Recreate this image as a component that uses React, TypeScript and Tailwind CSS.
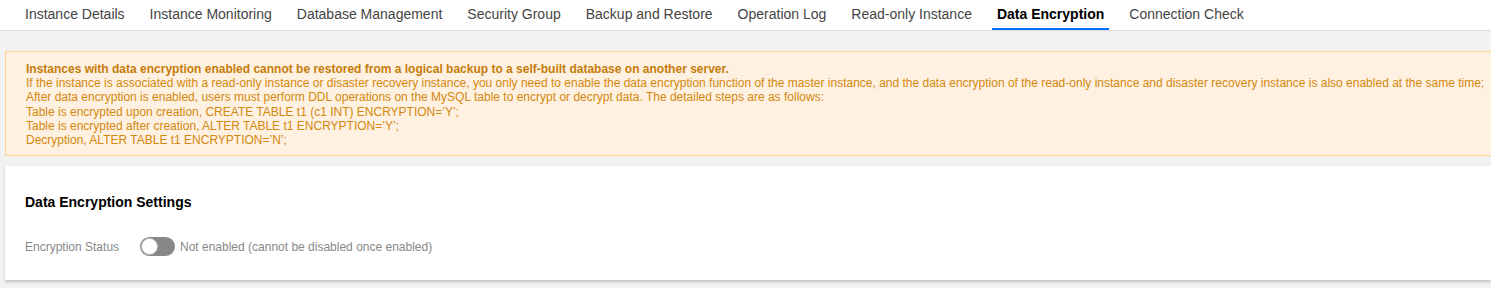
import React from "react";

const tabs = [
  "Instance Details",
  "Instance Monitoring",
  "Database Management",
  "Security Group",
  "Backup and Restore",
  "Operation Log",
  "Read-only Instance",
  "Data Encryption",
  "Connection Check",
];

export default function App() {
  return (
    <div
      className="w-[1491px] h-[288px] overflow-hidden bg-[#f2f2f2]"
      style={{ fontFamily: '"Liberation Sans", Arial, sans-serif' }}
    >
      <div className="h-[31px] bg-white border-b border-[#dddddd] flex items-stretch pl-[12.5px]">
        {tabs.map((t) => {
          const active = t === "Data Encryption";
          return (
            <div
              key={t}
              className={
                active
                  ? "relative px-[12.5px] flex items-center text-[14px] font-bold text-black"
                  : "relative px-[12.5px] flex items-center text-[14px] text-[#444444]"
              }
            >
              <span className="pb-[1px]">{t}</span>
              {active && (
                <div className="absolute left-[7.5px] right-[7.5px] bottom-0 h-[2px] bg-[#006eff]" />
              )}
            </div>
          );
        })}
      </div>
      <div className="pl-[5px] pt-[20px]">
        <div className="border border-r-0 border-[#ffd28c] bg-[#fef1e1] pl-[20px] pt-[10px] pb-[8px] text-[12px] leading-[14.2px] text-[#d4880f]">
          <div className="font-bold text-[#c67c0a]">
            Instances with data encryption enabled cannot be restored from a logical backup to a self-built database on another server.
          </div>
          <div>
            If the instance is associated with a read-only instance or disaster recovery instance, you only need to enable the data encryption function of the master instance, and the data encryption of the read-only instance and disaster recovery instance is also enabled at the same time;
          </div>
          <div>
            After data encryption is enabled, users must perform DDL operations on the MySQL table to encrypt or decrypt data. The detailed steps are as follows:
          </div>
          <div>Table is encrypted upon creation, CREATE TABLE t1 (c1 INT) ENCRYPTION=’Y’;</div>
          <div>Table is encrypted after creation, ALTER TABLE t1 ENCRYPTION=’Y’;</div>
          <div>Decryption, ALTER TABLE t1 ENCRYPTION=’N’;</div>
        </div>
        <div className="mt-[10px] bg-white h-[114px] shadow-[0_2px_3px_rgba(0,0,0,0.2)] pl-[20px] pt-[27px]">
          <div className="text-[14px] font-bold text-black leading-[18px]">
            Data Encryption Settings
          </div>
          <div className="mt-[26px] flex items-center text-[12px] text-[#888888]">
            <span className="w-[115px]">Encryption Status</span>
            <div className="w-[35px] h-[19px] rounded-full bg-[#888888] relative">
              <div className="absolute left-[1px] top-[1px] w-[17px] h-[17px] rounded-full bg-white border border-[#bbbbbb]" />
            </div>
            <span className="ml-[5px]">Not enabled (cannot be disabled once enabled)</span>
          </div>
        </div>
      </div>
    </div>
  );
}
